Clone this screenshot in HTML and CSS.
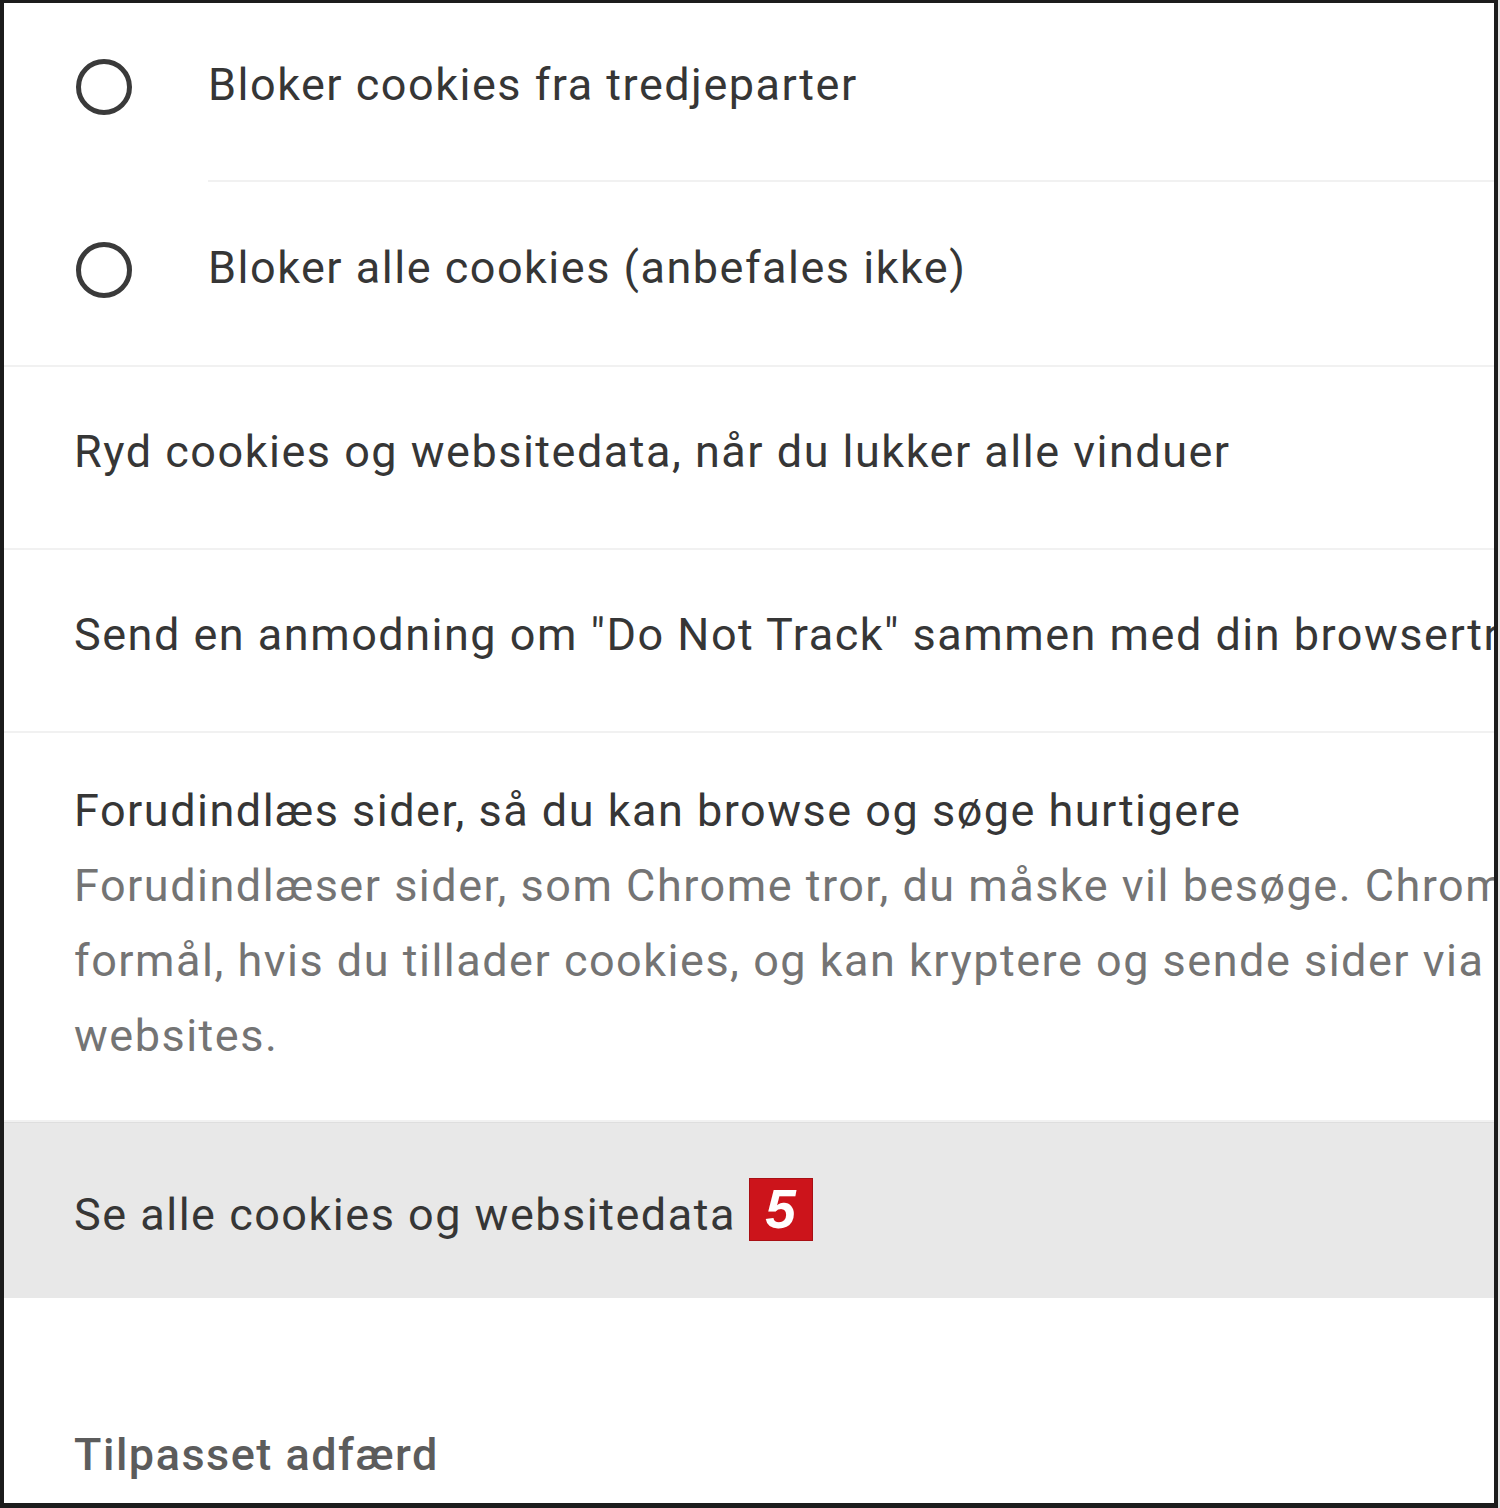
FILE: index.html
```html
<!DOCTYPE html>
<html lang="da">
<head>
    <meta charset="UTF-8">
    <meta name="viewport" content="width=device-width, initial-scale=1.0">
    <title>Cookies</title>
    <link rel="stylesheet" href="styles.css">
</head>
<body>

    <div class="frame">
        <div class="radio-row first">
            <span class="radio"></span>
            <div class="radio-label with-line">Bloker cookies fra tredjeparter</div>
        </div>
        <div class="radio-row second">
            <span class="radio"></span>
            <div class="radio-label">Bloker alle cookies (anbefales ikke)</div>
        </div>

        <div class="row">Ryd cookies og websitedata, når du lukker alle vinduer</div>
        <div class="row">Send en anmodning om "Do Not Track" sammen med din browsertrafik</div>

        <div class="row tall">
            <div>Forudindlæs sider, så du kan browse og søge hurtigere</div>
            <div class="secondary">Forudindlæser sider, som Chrome tror, du måske vil besøge. Chrome kan bruge cookies til dette<br>formål, hvis du tillader cookies, og kan kryptere og sende sider via Google for at skjule din identitet fra<br>websites.</div>
        </div>

        <div class="row active">Se alle cookies og websitedata <span class="badge">5</span></div>

        <h3 class="section-title">Tilpasset adfærd</h3>
    </div>

</body>
</html>
```

FILE: styles.css
```css
body {
    margin: 0;
    background: #e4e4e4;
    font-family: Roboto, "Noto Sans", Arial, sans-serif;
}

.frame {
    width: 1498px;
    height: 1508px;
    box-sizing: border-box;
    border: 4px solid #1c1c1c;
    border-top-width: 3px;
    border-bottom-width: 5px;
    background: white;
    overflow: hidden;
    color: #363636;
    font-size: 45px;
    line-height: 75px;
    letter-spacing: 1.5px;
    white-space: nowrap;
}

.radio-row {
    display: flex;
    align-items: flex-start;
}

.radio {
    flex: none;
    width: 46px;
    height: 46px;
    border: 5px solid #3a3a3a;
    border-radius: 50%;
    margin-left: 72px;
    margin-right: 76px;
}

.radio-label { flex: 1; }

.first .radio-label { padding: 44px 0 58px; }
.first .radio { margin-top: 56px; }

.second .radio-label { padding: 48px 0 60px; }
.second .radio { margin-top: 60px; }

.with-line { border-bottom: 2px solid #f1f1f1; }

.second { border-bottom: 2px solid #f1f1f1; }

.row {
    padding: 47px 0 59px 70px;
    border-bottom: 2px solid #f1f1f1;
}

.row.tall { padding: 40px 0 47px 70px; }

.secondary { color: #747474; }

.row.active {
    background: #e8e8e8;
    border-top: 1px solid #dedede;
    border-bottom: none;
    padding: 54px 0 46px 70px;
}

.badge {
    display: inline-block;
    width: 64px;
    height: 63px;
    margin-left: 0;
    vertical-align: 2px;
    background: #cc141b;
    box-shadow: inset 0 0 0 1px #a80f14;
    color: white;
    font-family: "Liberation Sans", Arial, sans-serif;
    font-weight: bold;
    font-style: italic;
    font-size: 55px;
    line-height: 63px;
    letter-spacing: 0;
    text-align: center;
}

.section-title {
    margin: 119px 0 0;
    padding-left: 70px;
    font-size: 45px;
    font-weight: 500;
    color: #5c5c5c;
}
```
